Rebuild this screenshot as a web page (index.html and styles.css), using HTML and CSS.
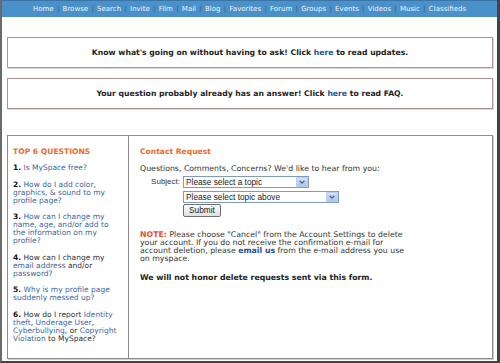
FILE: index.html
```html
<!DOCTYPE html>
<html lang="en">
<head>
    <meta charset="UTF-8">
    <title>MySpace - Contact</title>
    <link rel="stylesheet" href="styles.css">
</head>
<body>
    <div class="frame">
        <div class="nav">
            <a href="#">Home</a><span class="sep">|</span><a href="#">Browse</a><span class="sep">|</span><a href="#">Search</a><span class="sep">|</span><a href="#">Invite</a><span class="sep">|</span><a href="#">Film</a><span class="sep">|</span><a href="#">Mail</a><span class="sep">|</span><a href="#">Blog</a><span class="sep">|</span><a href="#">Favorites</a><span class="sep">|</span><a href="#">Forum</a><span class="sep">|</span><a href="#">Groups</a><span class="sep">|</span><a href="#">Events</a><span class="sep">|</span><a href="#">Videos</a><span class="sep">|</span><a href="#">Music</a><span class="sep">|</span><a href="#">Classifieds</a>
        </div>

        <div class="content">
            <div class="notice">Know what's going on without having to ask! Click <a href="#">here</a> to read updates.</div>
            <div class="notice">Your question probably already has an answer! Click <a href="#">here</a> to read FAQ.</div>

            <div class="main">
                <div class="faq">
                    <h2>TOP 6 QUESTIONS</h2>
                    <p><b>1.</b> <a href="#">Is MySpace free?</a></p>
                    <p><b>2.</b> <a href="#">How do I add color,<br>graphics, &amp; sound to my<br>profile page?</a></p>
                    <p><b>3.</b> <a href="#">How can I change my<br>name, age, and/or add to<br>the information on my<br>profile?</a></p>
                    <p><b>4.</b> How can I change my<br><a href="#">email address</a> and/or<br><a href="#">password?</a></p>
                    <p><b>5.</b> <a href="#">Why is my profile page<br>suddenly messed up?</a></p>
                    <p><b>6.</b> How do I report <a href="#">Identity<br>theft</a>, <a href="#">Underage User</a>,<br><a href="#">Cyberbullying</a>, or <a href="#">Copyright<br>Violation</a> to MySpace?</p>
                </div>

                <div class="contact">
                    <h2>Contact Request</h2>
                    <p class="intro">Questions, Comments, Concerns? We'd like to hear from you:</p>
                    <form class="form">
                        <label for="topic">Subject:</label>
                        <div class="select short">
                            <select id="topic"><option>Please select a topic</option></select>
                            <span class="arrow"><svg width="12" height="10" viewBox="0 0 12 10"><path d="M3 3.5 L6 6.5 L9 3.5" fill="none" stroke="#4d6185" stroke-width="1.6"/></svg></span>
                        </div>
                        <span></span>
                        <div class="select long">
                            <select><option>Please select topic above</option></select>
                            <span class="arrow"><svg width="12" height="10" viewBox="0 0 12 10"><path d="M3 3.5 L6 6.5 L9 3.5" fill="none" stroke="#4d6185" stroke-width="1.6"/></svg></span>
                        </div>
                        <span></span>
                        <div class="submit-row"><button type="button" class="submit">Submit</button></div>
                    </form>
                    <p class="note"><span class="label">NOTE:</span> Please choose "Cancel" from the Account Settings to delete<br>your account. If you do not receive the confirmation e-mail for<br>account deletion, please <a href="#">email us</a> from the e-mail address you use<br>on myspace.</p>
                    <p class="warn">We will not honor delete requests sent via this form.</p>
                </div>
            </div>
        </div>
    </div>
</body>
</html>
```

FILE: styles.css
```css
body {
    margin: 0;
    background: #fff;
    font-family: "DejaVu Sans", Verdana, sans-serif;
}
.frame {
    width: 500px;
    height: 363px;
    box-sizing: border-box;
    border-left: 2px solid #6a6a6a;
    border-right: 3px solid #444;
    border-bottom: 2px solid #444;
    overflow: hidden;
}
.nav {
    height: 17px;
    line-height: 17px;
    background: #4a90c9;
    border-top: 1px solid #3b74a6;
    box-sizing: border-box;
    text-align: center;
    font-size: 7px;
    white-space: nowrap;
}
.nav a {
    color: #eef4fb;
    text-decoration: none;
}
.nav .sep {
    color: #2d5f8e;
    margin: 0 3.3px;
}
.content {
    padding: 20px 4px 0 5px;
}
.notice {
    height: 29px;
    line-height: 29px;
    border: 1px solid #b09090;
    box-shadow: 1px 1px 0 #e2d6d6;
    text-align: center;
    font-size: 7.7px;
    font-weight: bold;
    color: #222;
    margin-bottom: 10px;
}
.notice a {
    color: #1d4f94;
    text-decoration: none;
}
.main {
    margin-top: 26px;
    height: 224px;
    box-sizing: border-box;
    border: 1px solid #8c8c8c;
    box-shadow: 1px 1px 0 #cfcfcf;
    display: grid;
    grid-template-columns: 121px 1fr;
    font-size: 7.5px;
    line-height: 8px;
    color: #333;
}
.main h2 {
    font-size: 7.6px;
    font-weight: bold;
    color: #ec6b2c;
    margin: 0 0 8px 0;
    line-height: 8px;
}
.main p {
    margin: 0 0 8.5px 0;
}
.main a {
    color: #3a67a0;
    text-decoration: none;
}
.faq {
    border-right: 1px solid #8c8c8c;
    padding: 12px 4px 0 5px;
    white-space: nowrap;
}
.faq b {
    color: #111;
}
.contact {
    padding: 12px 8px 0 11px;
    white-space: nowrap;
    font-size: 7.8px;
}
.contact h2 {
    margin-bottom: 9px;
}
.contact .intro {
    margin-bottom: 3px;
}
.form {
    display: grid;
    grid-template-columns: 43px auto;
    row-gap: 3px;
    justify-items: start;
    align-items: center;
    margin: 0 0 14px 0;
}
.form label {
    justify-self: end;
    padding-right: 3px;
    font-family: "Liberation Sans", Arial, sans-serif;
    font-size: 8px;
    color: #333;
}
.select {
    position: relative;
    height: 12px;
}
.select.short { width: 126px; }
.select.long { width: 156px; }
.select select {
    appearance: none;
    -webkit-appearance: none;
    width: 100%;
    height: 12px;
    margin: 0;
    padding: 0 2px;
    box-sizing: border-box;
    border: 1px solid #7f9db9;
    border-radius: 0;
    background: #fff;
    font-family: "Liberation Sans", Arial, sans-serif;
    font-size: 8.3px;
    line-height: 10px;
    color: #222;
}
.select .arrow {
    position: absolute;
    right: 1px;
    top: 1px;
    width: 12px;
    height: 10px;
    box-sizing: border-box;
    background: linear-gradient(#d4e1f8, #aec4ef);
    border: 1px solid #bccdee;
    border-radius: 1px;
    display: flex;
    align-items: center;
    justify-content: center;
}
.select .arrow svg {
    display: block;
    width: 10px;
    height: 8px;
}
.submit-row {
    margin-top: -2px;
}
.submit {
    display: block;
    width: 38px;
    height: 13px;
    padding: 0;
    border: 1px solid #6f6f6f;
    border-radius: 2px;
    background: linear-gradient(#fcfcfb, #e3e1d8);
    font-family: "Liberation Sans", Arial, sans-serif;
    font-size: 8.3px;
    line-height: 11px;
    color: #222;
}
.note {
    margin-bottom: 10.5px !important;
}
.note .label {
    color: #e0532c;
    font-weight: bold;
}
.note a {
    color: #1d4f94;
    font-weight: bold;
}
.warn {
    font-weight: bold;
    color: #222;
}
```
